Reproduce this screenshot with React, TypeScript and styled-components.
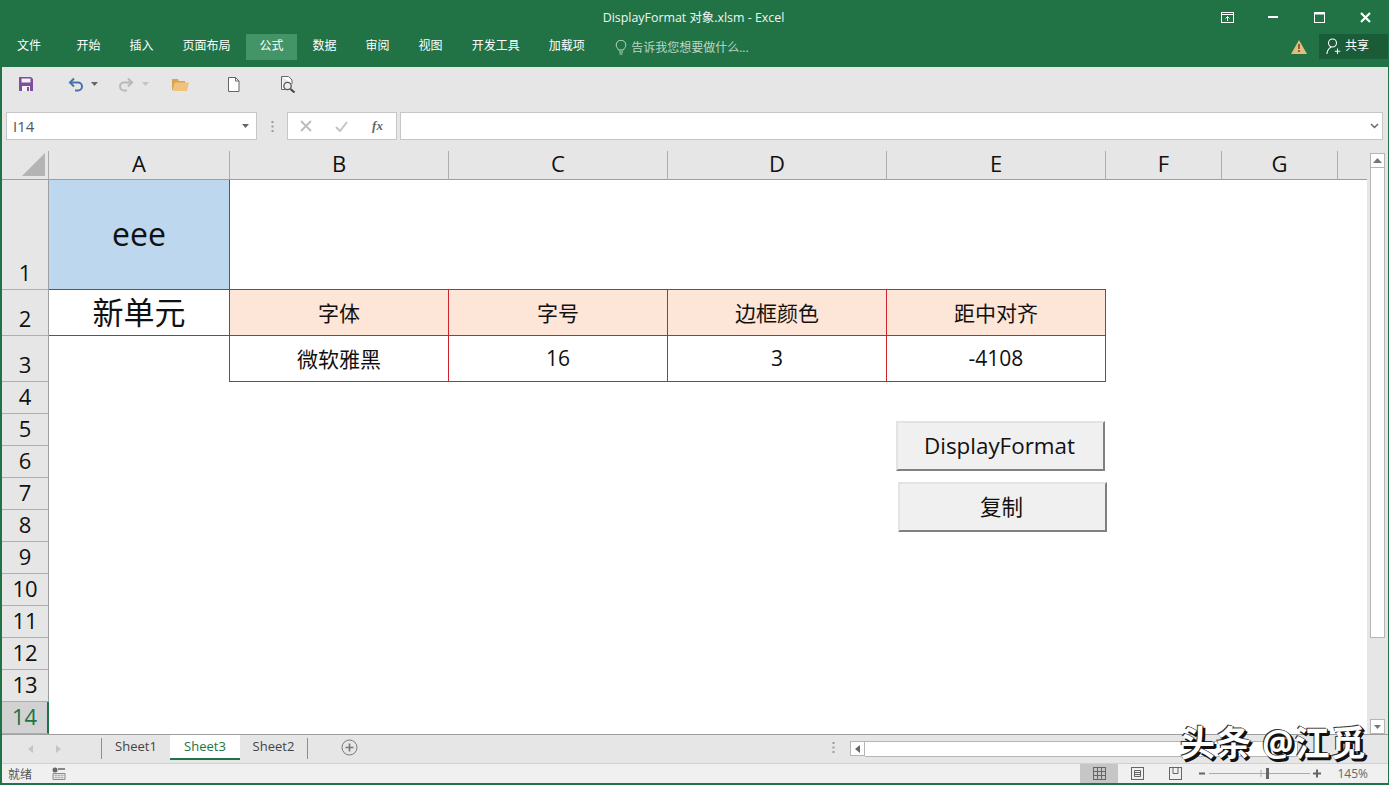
import React from "react";
import styled, { createGlobalStyle } from "styled-components";

const Global = createGlobalStyle`
  html, body { margin: 0; padding: 0; background: #217346; }
  body { font-family: "Open Sans", "Noto Sans CJK SC", sans-serif; overflow: hidden; }
  * { box-sizing: border-box; }
`;

const Win = styled.div`
  width: 1389px; height: 785px; display: flex; flex-direction: column;
  background: #e6e6e6; border-left: 2px solid #217346; border-bottom: 2px solid #217346;
  border-right: 1px solid #217346; position: relative; overflow: hidden;
`;
const Top = styled.header`
  height: 67px; margin-left: -2px; margin-right: -1px; background: #217346; color: #fff;
  display: flex; flex-direction: column; flex: none;
`;
const TitleRow = styled.div`height: 34px; display: flex; align-items: center; position: relative; justify-content: center;`;
const Title = styled.div`font-size: 12.4px; color: #f0f5f2; padding-right: 2px;`;
const WinBtns = styled.div`
  position: absolute; right: 1px; top: 0; height: 34px; display: flex; align-items: center;
`;
const WinBtn = styled.div`
  width: 46px; display: flex; justify-content: center; align-items: center;
`;
const TabRow = styled.nav`height: 26px; display: flex; align-items: stretch; padding-left: 4px; gap: 2px;`;
const Tab = styled.div<{ $active?: boolean; $file?: boolean }>`
  padding: 0 ${p => (p.$file ? "13px" : "13.5px")};
  margin-right: ${p => (p.$file ? "7px" : "0")};
  font-size: 12px; line-height: 24px; color: #fff;
  background: ${p => (p.$active ? "#439467" : "transparent")};
`;
const Tell = styled.div`
  display: flex; align-items: center; gap: 4px; margin-left: 15px; font-size: 12px; color: #bcd5c7;
`;
const TabRight = styled.div`margin-left: auto; display: flex; align-items: center; gap: 12px;`;
const Share = styled.div`
  width: 70px; height: 25px; background: #1a5c38; display: flex; align-items: center; gap: 4px;
  padding: 0 0 0 7px; font-size: 12px; color: #fff; margin-bottom: 1px;
`;
const ShareText = styled.span`position: relative; top: -2px;`;
const Qat = styled.div`
  height: 36px; flex: none; display: flex; align-items: center; padding-bottom: 2px;
`;
const QatItem = styled.div<{ $w: number; $ml?: number }>`
  width: ${p => p.$w}px; margin-left: ${p => p.$ml ?? 0}px; display: flex; justify-content: center; align-items: center; flex: none;
`;
const FormulaBar = styled.div`
  height: 28px; margin-top: 9px; flex: none; display: flex; align-items: stretch; padding-left: 4px;
`;
const Box = styled.div<{ $w?: number; $ml?: number; $mr?: number; $end?: boolean }>`
  ${p => (p.$w ? `width:${p.$w}px;flex:none;` : "flex:1;")}
  margin-left: ${p => p.$ml ?? 0}px;
  margin-right: ${p => p.$mr ?? 0}px;
  justify-content: ${p => (p.$end ? "flex-end" : "flex-start")};
  background: #fff; border: 1px solid #c6c6c6; display: flex; align-items: center;
`;
const NameText = styled.span`flex: 1; padding-left: 6px; font-size: 15px; color: #555;`;
const FxSlot = styled.div<{ $w: number }>`width: ${p => p.$w}px; display: flex; justify-content: center; align-items: center;`;
const Fx = styled.span`font-family: "Liberation Serif", serif; font-style: italic; font-weight: 700; font-size: 13px; color: #666;`;
const Dots = styled.div`
  width: 30px; flex: none; display: flex; justify-content: center; align-items: center;
`;
const Main = styled.div`height: 583px; margin-top: 11px; display: flex; flex: none;`;
const Sheet = styled.div`
  width: 1365px; flex: none; display: grid; background: #fff; position: relative;
  grid-template-columns: 47px 181px 219px 219px 219px 219px 116px 116px 29px;
  grid-template-rows: 29px 110px 46px 46px repeat(11, 32px);
`;
const Corner = styled.div`
  background: #e6e6e6; border-right: 1px solid #aaa; border-bottom: 1px solid #9e9e9e;
  display: flex; align-items: flex-end; justify-content: flex-end; padding: 0 3px 3px 0;
`;
const ColHead = styled.div`
  background: #e6e6e6; border-right: 1px solid #aeaeae; border-bottom: 1px solid #9e9e9e;
  font-size: 22px; color: #111; display: flex; align-items: center; justify-content: center; padding-bottom: 5px;
`;
const ColFill = styled.div`background: #e6e6e6; border-bottom: 1px solid #9e9e9e;`;
const RowHead = styled.div<{ $sel?: boolean }>`
  background: ${p => (p.$sel ? "#d2d2d2" : "#e6e6e6")};
  color: ${p => (p.$sel ? "#217346" : "#111")};
  border-right: ${p => (p.$sel ? "2px solid #217346" : "1px solid #9e9e9e")};
  border-bottom: 1px solid #aeaeae; font-size: 22px; line-height: 30px; padding-bottom: 2px; text-align: center;
  display: flex; align-items: flex-end; justify-content: center;
`;
const RED = "#d0222b";
const Cell = styled.div<{ $r?: boolean; $b?: boolean; $bg?: string; $size?: number; $up?: number }>`
  background: ${p => p.$bg ?? "#fff"};
  border-right: ${p => (p.$r ? `1px solid ${RED}` : "none")};
  border-bottom: ${p => (p.$b ? `1px solid ${RED}` : "none")};
  font-size: ${p => p.$size ?? 21}px; color: #111; padding-bottom: ${p => p.$up ?? 2}px;
  display: flex; align-items: center; justify-content: center;
`;
const FillRow = styled.div`grid-column: 2 / -1; background: #fff;`;
const SheetButton = styled.div<{ $x: number; $y: number; $size?: number; $up?: number }>`
  position: absolute; left: ${p => p.$x}px; top: ${p => p.$y}px; width: 209px; height: 50px;
  background: #f0f0f0; border: 2px solid #e3e3e3; border-right: 2px solid #808080; border-bottom: 2px solid #808080;
  font-size: ${p => p.$size ?? 22.4}px; color: #111; display: flex; align-items: center; justify-content: center;
  padding: 0 2px ${p => p.$up ?? 1}px 0;
`;
const VScroll = styled.div`
  flex: 1; display: flex; flex-direction: column; align-items: center; padding: 2px 3px 0 3px; background: #e6e6e6;
`;
const ScrollBtn = styled.div<{ $h?: number; $w?: number }>`
  width: ${p => p.$w ?? 15}px; height: ${p => p.$h ?? 15}px; background: #fff; border: 1px solid #b5b5b5; flex: none;
  display: flex; align-items: center; justify-content: center;
`;
const VThumb = styled.div`width: 15px; height: 470px; background: #fff; border: 1px solid #b5b5b5; border-top: none; flex: none;`;
const Spacer = styled.div`flex: 1;`;
const SheetBar = styled.div`
  height: 29px; flex: none; background: #e6e6e6; border-top: 1px solid #9e9e9e; display: flex; align-items: flex-start; position: relative;
`;
const Nav = styled.div`width: 99px; height: 27px; flex: none; display: flex; align-items: center; padding-left: 26px; gap: 23px;`;
const TabSep = styled.div`width: 1px; height: 21px; margin-top: 3px; background: #8e8e8e; flex: none;`;
const SheetTab = styled.div<{ $w: number; $active?: boolean }>`
  width: ${p => p.$w}px; height: ${p => (p.$active ? 25 : 24)}px; flex: none; font-size: 13px; text-align: center; line-height: 23px;
  color: ${p => (p.$active ? "#217346" : "#444")};
  background: ${p => (p.$active ? "#fff" : "transparent")};
  border-bottom: ${p => (p.$active ? "2px solid #217346" : "none")};
`;
const Plus = styled.div`margin-left: 33px; margin-top: 4px; height: 18px; display: flex;`;
const BarDots = styled.div`position: absolute; left: 830px; top: 7px; display: flex;`;
const HScroll = styled.div`
  position: absolute; left: 848px; top: 6px; right: 0; height: 16px; display: flex; align-items: stretch;
`;
const HThumb = styled.div`flex: 1; background: #fff; border: 1px solid #b5b5b5; border-left: none; margin-right: 90px;`;
const Status = styled.footer`
  flex: 1; background: #f0f0f0; border-top: 1px solid #d0d0d0; display: flex; align-items: center;
  font-size: 12px; color: #555; padding-left: 6px;
`;
const StatusIcon = styled.div`margin-left: 20px; display: flex;`;
const StatusRight = styled.div`margin-left: auto; display: flex; align-items: center; height: 100%;`;
const ViewBtn = styled.div<{ $active?: boolean }>`
  width: 38px; height: 100%; display: flex; align-items: center; justify-content: center;
  background: ${p => (p.$active ? "#c6c6c6" : "transparent")};
`;
const Zoomer = styled.div`display: flex; align-items: center; margin-left: 5px;`;
const Percent = styled.span`margin-left: 16px; margin-right: 20px; font-size: 12px; color: #666;`;
const Watermark = styled.div`
  position: absolute; left: 1178px; top: 720px; font-size: 35px; line-height: 46px; color: #fff; font-weight: 700; white-space: nowrap;
  letter-spacing: 1px;
  text-shadow: 2px 3px 0 #111, 3px 2px 0 #111, -1px -1px 0 #333, 1px 0 0 #222;
`;

const Caret = ({ c = "#666" }: { c?: string }) => (
  <svg width="7" height="4" viewBox="0 0 7 4"><path d="M0 0h7L3.5 4z" fill={c} /></svg>
);
const SaveIcon = () => (
  <svg width="16" height="16" viewBox="0 0 16 16">
    <path d="M1 1h12l2 2v12H1z" fill="#7d4f9c" />
    <path d="M3.5 2.5h9v4h-9z" fill="#f2f2f2" />
    <path d="M4 10h8v5H4z" fill="#f2f2f2" />
    <path d="M9 11h2v4H9z" fill="#7d4f9c" />
  </svg>
);
const UndoIcon = ({ c, flip }: { c: string; flip?: boolean }) => (
  <svg width="16" height="15" viewBox="0 0 16 15" style={flip ? { transform: "scaleX(-1)" } : undefined}>
    <path d="M6 1.5 2 5.5 6 9.5" fill="none" stroke={c} strokeWidth="2" />
    <path d="M2.5 5.5H10a3.7 3.7 0 0 1 0 8H7" fill="none" stroke={c} strokeWidth="2" />
  </svg>
);
const FolderIcon = () => (
  <svg width="17" height="14" viewBox="0 0 17 14">
    <path d="M0 2h6l1 2h6v2H3L1 13H0z" fill="#d9a552" />
    <path d="M3 5.5h14L15 14H1z" fill="#f0c27c" />
  </svg>
);
const PageIcon = () => (
  <svg width="13" height="15" viewBox="0 0 13 15">
    <path d="M1.5.5h7l3.5 3.5v10.5H1.5z" fill="#fff" stroke="#666" />
    <path d="M8.5.5V4H12" fill="none" stroke="#666" />
  </svg>
);
const PreviewIcon = () => (
  <svg width="16" height="17" viewBox="0 0 16 17">
    <path d="M1.5.5h7L12 4v4M1.5.5v13H5" fill="#fff" stroke="#666" />
    <circle cx="7.5" cy="10" r="3.7" fill="#e8eef2" stroke="#555" strokeWidth="1.3" />
    <path d="M10.5 13l4 3.5" stroke="#444" strokeWidth="2" />
  </svg>
);
const Bulb = () => (
  <svg width="12" height="15" viewBox="0 0 12 15" fill="none" stroke="#bcd5c7">
    <path d="M3.5 10C3 8 1.2 7.5 1.2 5a4.8 4.8 0 0 1 9.600 0C10.800 7.500 9 8 8.500 10z" />
    <path d="M4 12h4M4.500 14h3" />
  </svg>
);
const VDots = () => (
  <svg width="3" height="11" viewBox="0 0 3 11" fill="#9a9a9a">
    <rect x="0.500" y="0" width="2" height="2" /><rect x="0.500" y="4.500" width="2" height="2" /><rect x="0.500" y="9" width="2" height="2" />
  </svg>
);

const tabs = ["开始", "插入", "页面布局", "公式", "数据", "审阅", "视图", "开发工具", "加载项"];
const colW = ["A", "B", "C", "D", "E", "F", "G"];
const rows = [4, 5, 6, 7, 8, 9, 10, 11, 12, 13, 14];

export default function App() {
  return (
    <>
      <Global />
      <Win>
        <Top>
          <TitleRow>
            <Title>DisplayFormat 对象.xlsm - Excel</Title>
            <WinBtns>
              <WinBtn>
                <svg width="13" height="11" viewBox="0 0 13 11" fill="none" stroke="#fff">
                  <rect x=".5" y=".5" width="12" height="10" /><path d="M1 2.500h11M6.500 9V4.500M4.500 6.500l2-2 2 2" />
                </svg>
              </WinBtn>
              <WinBtn><svg width="10" height="2"><rect width="10" height="2" fill="#fff" /></svg></WinBtn>
              <WinBtn>
                <svg width="11" height="11" viewBox="0 0 11 11" fill="none" stroke="#fff"><rect x=".5" y=".5" width="10" height="10" /><path d="M0 1.500h11" strokeWidth="2" /></svg>
              </WinBtn>
              <WinBtn>
                <svg width="11" height="11" viewBox="0 0 11 11" stroke="#fff" strokeWidth="2.200"><path d="M1 1l9 9M10 1l-9 9" /></svg>
              </WinBtn>
            </WinBtns>
          </TitleRow>
          <TabRow>
            <Tab $file>文件</Tab>
            {tabs.map(t => <Tab key={t} $active={t === "公式"}>{t}</Tab>)}
            <Tell><Bulb />告诉我您想要做什么...</Tell>
            <TabRight>
              <svg width="16" height="14" viewBox="0 0 16 14">
                <path d="M8 0l8 14H0z" fill="#e2bd7d" /><path d="M7.200 4h1.600v5H7.200zM7.200 10h1.600v2H7.200z" fill="#7a4b22" />
              </svg>
              <Share>
                <svg width="15" height="17" viewBox="0 0 15 17" fill="none" stroke="#fff" strokeWidth="1.100">
                  <circle cx="6.500" cy="5" r="4" /><path d="M.8 16c.5-4 2.500-6 4.500-7M11.500 10.500v5.500M8.800 13.200h5.500" />
                </svg>
                <ShareText>共享</ShareText>
              </Share>
            </TabRight>
          </TabRow>
        </Top>

        <Qat>
          <QatItem $w={48}><SaveIcon /></QatItem>
          <QatItem $ml={12} $w={28}><UndoIcon c="#4473ab" /></QatItem>
          <QatItem $w={8}><Caret /></QatItem>
          <QatItem $ml={14} $w={28}><UndoIcon c="#b8b8b8" flip /></QatItem>
          <QatItem $w={10}><Caret c="#c4c4c4" /></QatItem>
          <QatItem $w={60}><FolderIcon /></QatItem>
          <QatItem $w={46}><PageIcon /></QatItem>
          <QatItem $w={64}><PreviewIcon /></QatItem>
        </Qat>

        <FormulaBar>
          <Box $w={251}>
            <NameText>I14</NameText>
            <FxSlot $w={22}><Caret /></FxSlot>
          </Box>
          <Dots><VDots /></Dots>
          <Box $w={110}>
            <FxSlot $w={36}>
              <svg width="12" height="12" viewBox="0 0 12 12" stroke="#bbb" strokeWidth="1.800"><path d="M1 1l10 10M11 1L1 11" /></svg>
            </FxSlot>
            <FxSlot $w={35}>
              <svg width="13" height="11" viewBox="0 0 13 11" fill="none" stroke="#c4c4c4" strokeWidth="2"><path d="M1 6l4 4 7-9" /></svg>
            </FxSlot>
            <FxSlot $w={37}><Fx>fx</Fx></FxSlot>
          </Box>
          <Box $ml={3} $mr={5} $end>
            <FxSlot $w={15}>
              <svg width="9" height="6" viewBox="0 0 9 6" fill="none" stroke="#666" strokeWidth="1.500"><path d="M1 1l3.500 3.500L8 1" /></svg>
            </FxSlot>
          </Box>
        </FormulaBar>

        <Main>
          <Sheet>
            <Corner>
              <svg width="23" height="23" viewBox="0 0 23 23"><path d="M23 0v23H0z" fill="#b4b4b4" /></svg>
            </Corner>
            {colW.map(c => <ColHead key={c}>{c}</ColHead>)}
            <ColFill />

            <RowHead>1</RowHead>
            <Cell $r $b $bg="#bdd7ee" $size={32}>eee</Cell>
            <Cell $b /><Cell $b /><Cell $b /><Cell $b /><Cell /><Cell /><Cell />

            <RowHead>2</RowHead>
            <Cell $r $b $size={31} $up={4}>新单元</Cell>
            {["字体", "字号", "边框颜色", "距中对齐"].map(t => <Cell key={t} $r $b $bg="#fde5d8">{t}</Cell>)}
            <Cell /><Cell /><Cell />

            <RowHead>3</RowHead>
            <Cell $r />
            {["微软雅黑", "16", "3", "-4108"].map(t => <Cell key={t} $r $b>{t}</Cell>)}
            <Cell /><Cell /><Cell />

            {rows.map(r => (
              <React.Fragment key={r}>
                <RowHead $sel={r === 14}>{r}</RowHead>
                <FillRow />
              </React.Fragment>
            ))}

            <SheetButton $x={894} $y={270}>DisplayFormat</SheetButton>
            <SheetButton $x={896} $y={331} $size={21.5} $up={3}>复制</SheetButton>
          </Sheet>
          <VScroll>
            <ScrollBtn><svg width="9" height="5" viewBox="0 0 9 5"><path d="M0 5h9L4.500 0z" fill="#777" /></svg></ScrollBtn>
            <VThumb />
            <Spacer />
            <ScrollBtn><Caret c="#777" /></ScrollBtn>
          </VScroll>
        </Main>

        <SheetBar>
          <Nav>
            <svg width="5" height="8" viewBox="0 0 5 8"><path d="M5 0v8L0 4z" fill="#c4c4c4" /></svg>
            <svg width="5" height="8" viewBox="0 0 5 8"><path d="M0 0v8l5-4z" fill="#c4c4c4" /></svg>
          </Nav>
          <TabSep />
          <SheetTab $w={68}>Sheet1</SheetTab>
          <SheetTab $w={70} $active>Sheet3</SheetTab>
          <SheetTab $w={67}>Sheet2</SheetTab>
          <TabSep />
          <Plus>
            <svg width="17" height="17" viewBox="0 0 17 17" fill="none" stroke="#777">
              <circle cx="8.500" cy="8.500" r="7.500" /><path d="M4.500 8.500h8M8.500 4.500v8" strokeWidth="1.600" />
            </svg>
          </Plus>
          <BarDots><VDots /></BarDots>
          <HScroll>
            <ScrollBtn>
              <svg width="5" height="8" viewBox="0 0 5 8"><path d="M5 0v8L0 4z" fill="#666" /></svg>
            </ScrollBtn>
            <HThumb />
          </HScroll>
        </SheetBar>

        <Status>
          就绪
          <StatusIcon>
            <svg width="14" height="13" viewBox="0 0 14 13">
              <circle cx="3" cy="3" r="2.500" fill="#666" />
              <path d="M6 1h7v2H6z" fill="#888" />
              <path d="M1 6.500h12v6H1z" fill="none" stroke="#888" />
              <path d="M1 8.500h12M1 10.500h12M4 6.500v6M7 6.500v6M10 6.500v6" stroke="#aaa" strokeWidth=".7" />
            </svg>
          </StatusIcon>
          <StatusRight>
            <ViewBtn $active>
              <svg width="13" height="13" viewBox="0 0 13 13" fill="none" stroke="#666">
                <rect x=".5" y=".5" width="12" height="12" /><path d="M4.500 0v13M8.500 0v13M0 4.500h13M0 8.500h13" />
              </svg>
            </ViewBtn>
            <ViewBtn>
              <svg width="13" height="13" viewBox="0 0 13 13" fill="none" stroke="#666">
                <rect x=".5" y=".5" width="12" height="12" /><path d="M3.500 3.500h6v6h-6zM3.500 5.500h6M3.500 7.500h6" />
              </svg>
            </ViewBtn>
            <ViewBtn>
              <svg width="13" height="13" viewBox="0 0 13 13" fill="none" stroke="#666">
                <rect x=".5" y=".5" width="12" height="12" /><path d="M4 .5v6h5v-6" />
              </svg>
            </ViewBtn>
            <Zoomer>
              <svg width="122" height="13" viewBox="0 0 122 13">
                <path d="M0 6.500h6" stroke="#666" strokeWidth="2" />
                <path d="M10 6.500h101M62 3v7" stroke="#aaa" />
                <rect x="67" y="1" width="3" height="11" fill="#666" />
                <path d="M114 6.500h8M118 2.500v8" stroke="#666" strokeWidth="2" />
              </svg>
            </Zoomer>
            <Percent>145%</Percent>
          </StatusRight>
        </Status>
        <Watermark>头条 @江觅</Watermark>
      </Win>
    </>
  );
}
